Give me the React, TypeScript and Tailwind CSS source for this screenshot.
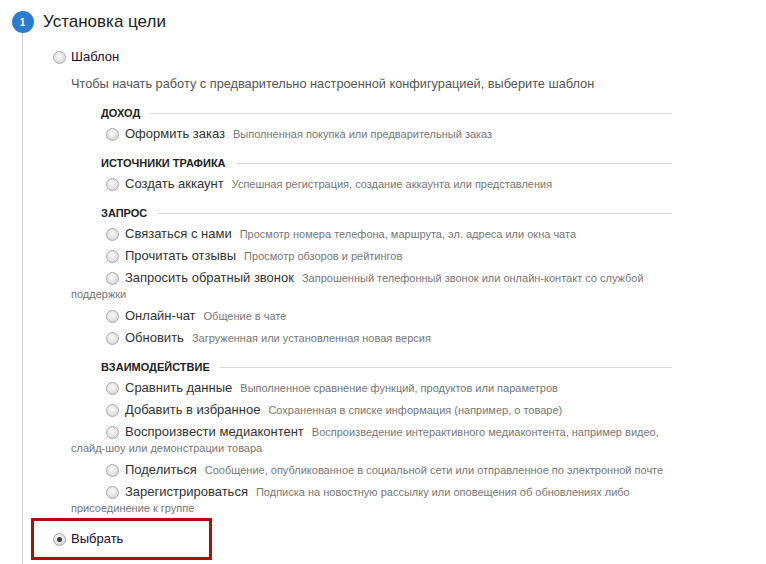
import React from "react";

type Goal = { label: string; desc: string };
type Section = { title: string; goals: Goal[] };

const SECTIONS: Section[] = [
    {
        title: "Доход",
        goals: [{ label: "Оформить заказ", desc: "Выполненная покупка или предварительный заказ" }],
    },
    {
        title: "Источники трафика",
        goals: [{ label: "Создать аккаунт", desc: "Успешная регистрация, создание аккаунта или представления" }],
    },
    {
        title: "Запрос",
        goals: [
            { label: "Связаться с нами", desc: "Просмотр номера телефона, маршрута, эл. адреса или окна чата" },
            { label: "Прочитать отзывы", desc: "Просмотр обзоров и рейтингов" },
            { label: "Запросить обратный звонок", desc: "Запрошенный телефонный звонок или онлайн-контакт со службой поддержки" },
            { label: "Онлайн-чат", desc: "Общение в чате" },
            { label: "Обновить", desc: "Загруженная или установленная новая версия" },
        ],
    },
    {
        title: "Взаимодействие",
        goals: [
            { label: "Сравнить данные", desc: "Выполненное сравнение функций, продуктов или параметров" },
            { label: "Добавить в избранное", desc: "Сохраненная в списке информация (например, о товаре)" },
            { label: "Воспроизвести медиаконтент", desc: "Воспроизведение интерактивного медиаконтента, например видео, слайд-шоу или демонстрации товара" },
            { label: "Поделиться", desc: "Сообщение, опубликованное в социальной сети или отправленное по электронной почте" },
            { label: "Зарегистрироваться", desc: "Подписка на новостную рассылку или оповещения об обновлениях либо присоединение к группе" },
        ],
    },
];

function Radio({ checked = false }: { checked?: boolean }) {
    return (
        <span className="inline-flex items-center justify-center w-[13px] h-[13px] rounded-full border border-[#ababab] bg-[radial-gradient(circle_at_45%_40%,#fafafa_0%,#e2e2e2_55%,#cbcbcb_100%)] align-middle shrink-0">
            {checked && <span className="block w-[5px] h-[5px] rounded-full bg-[#3a3a3a]" />}
        </span>
    );
}

export default function App() {
    return (
        <div className="w-[766px] h-[564px] overflow-hidden bg-white font-['Liberation_Sans',Arial,sans-serif] pt-[11px] flex">
            {/* step marker + timeline */}
            <div className="w-[44px] flex flex-col items-center pl-[1px]">
                <div className="w-[22px] h-[22px] rounded-full bg-[#2b7bd1] text-white text-[10px] font-bold flex items-center justify-center">
                    1
                </div>
                <div className="w-px flex-1 bg-[#cfcfcf]" />
            </div>

            <div className="flex-1">
                <h1 className="-ml-[1px] text-[17px] leading-[22px] text-[#222]">Установка цели</h1>

                <div className="mt-[16px] ml-[9px] flex items-center gap-[5px] h-[16px]">
                    <Radio />
                    <span className="text-[13px] text-[#220a33]">Шаблон</span>
                </div>

                <div className="ml-[27px] w-[601px]">
                    <p className="mt-[11px] text-[12.75px] leading-[16px] text-[#555]">
                        Чтобы начать работу с предварительно настроенной конфигурацией, выберите шаблон
                    </p>

                    <div className="mt-[14px] flex flex-col gap-[14px]">
                        {SECTIONS.map((s) => (
                            <div key={s.title}>
                                <div className="flex items-center h-[14px] pl-[30px]">
                                    <span className="text-[11px] font-bold uppercase text-[#222] leading-[14px]">{s.title}</span>
                                    <span className="ml-[10px] flex-1 h-px bg-[#dadada]" />
                                </div>
                                <div className="mt-[6px] flex flex-col gap-[6px]">
                                    {s.goals.map((g) => (
                                        <div key={g.label} className="indent-[35px] text-[13px] leading-[16px]">
                                            <Radio />
                                            <span className="ml-[6px] text-[#333] leading-none">{g.label}</span>
                                            <span className="ml-[8px] text-[11px] text-[#777] leading-none">{g.desc}</span>
                                        </div>
                                    ))}
                                </div>
                            </div>
                        ))}
                    </div>
                </div>

                <div className="mt-[2px] -ml-[13px] w-[181px] border-[3px] border-[#b00e0e] pl-[19px] py-[10px]">
                    <div className="flex items-center gap-[5px] h-[16px]">
                        <Radio checked />
                        <span className="text-[13px] text-[#220a33]">Выбрать</span>
                    </div>
                </div>
            </div>
        </div>
    );
}
